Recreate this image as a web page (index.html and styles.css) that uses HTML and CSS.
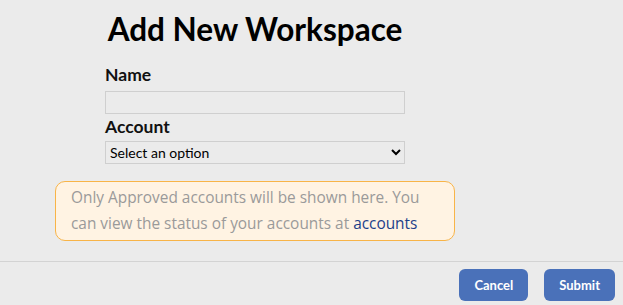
FILE: index.html
```html
<!DOCTYPE html>
<html lang="en">

<head>
    <meta charset="UTF-8">
    <meta name="viewport" content="width=device-width, initial-scale=1.0">
    <title>Add New Workspace</title>
    <link rel="stylesheet" href="styles.css">
</head>

<body>

    <div class="workspace">
        <div class="workspace__main">
            <h1 class="workspace__title">Add New Workspace</h1>
            <form class="workspace__form">
                <label class="workspace__label" for="name">Name</label>
                <input class="workspace__input" type="text" id="name">
                <label class="workspace__label" for="account">Account</label>
                <select class="workspace__select" id="account">
                    <option>Select an option</option>
                </select>
            </form>
            <div class="workspace__notice">
                <span>Only Approved accounts will be shown here. You</span><br>
                <span>can view the status of your accounts at</span>
                <a href="#" class="workspace__link">accounts</a>
            </div>
        </div>

        <div class="workspace__footer">
            <button class="workspace__btn">Cancel</button>
            <button class="workspace__btn">Submit</button>
        </div>
    </div>

</body>

</html>
```

FILE: styles.css
```css
body{
    margin: 0;
    background-color: #ebebeb;
    font-family: Lato, "Open Sans", sans-serif;
}

.workspace{
    width: 623px;
    height: 305px;
    display: flex;
    flex-direction: column;
}

.workspace__main{
    width: 400px;
    margin-left: 55px;
    flex: 1;
}

.workspace__title{
    margin: 9px 0 0;
    font-size: 31.5px;
    line-height: 40px;
    text-align: center;
    color: #000;
}

.workspace__form{
    width: 300px;
    margin: 15px auto 0;
    display: flex;
    flex-direction: column;
}

.workspace__label{
    font-weight: bold;
    font-size: 17.5px;
    line-height: 22px;
    color: #111;
}

.workspace__input{
    height: 23px;
    box-sizing: border-box;
    margin: 5px 0 2px;
    border: 1px solid #cfcfcf;
    background-color: #ebebeb;
}

.workspace__select{
    height: 23px;
    box-sizing: border-box;
    margin-top: 3px;
    border: 1px solid #cfcfcf;
    background-color: #ebebeb;
    font-family: inherit;
    font-size: 14px;
    color: #000;
}

.workspace__notice{
    margin-top: 17px;
    padding: 3px 15px;
    border: 1px solid #f8b448;
    border-radius: 10px;
    background-color: #fff3e3;
    color: #9a9a9a;
    font-family: "Open Sans", sans-serif;
    font-size: 15.4px;
    line-height: 26px;
    white-space: nowrap;
}

.workspace__link{
    color: #1d3f8a;
    text-decoration: none;
}

.workspace__footer{
    border-top: 1px solid #d3d3d3;
    padding: 7px 8px 4px;
    display: flex;
    justify-content: flex-end;
    gap: 16px;
}

.workspace__btn{
    height: 32px;
    padding: 0 15px;
    border: none;
    border-radius: 6px;
    background-color: #4a71b9;
    color: #fff;
    font-family: inherit;
    font-weight: bold;
    font-size: 13px;
}
```
